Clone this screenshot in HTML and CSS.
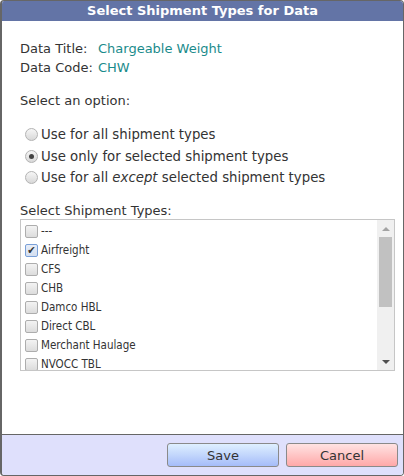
FILE: index.html
```html
<!DOCTYPE html>
<html>
<head>
<meta charset="utf-8">
<link rel="stylesheet" href="styles.css">
</head>
<body>
<div class="dialog">
  <div class="header">Select Shipment Types for Data</div>
  <div class="content">
    <div class="info">
      <div class="info-row"><span class="label">Data Title:</span><span class="value">Chargeable Weight</span></div>
      <div class="info-row"><span class="label">Data Code:</span><span class="value">CHW</span></div>
    </div>
    <div class="prompt">Select an option:</div>
    <div class="options">
      <div class="option"><span class="radio"></span><span>Use for all shipment types</span></div>
      <div class="option"><span class="radio checked"></span><span>Use only for selected shipment types</span></div>
      <div class="option"><span class="radio"></span><span>Use for all <em>except</em> selected shipment types</span></div>
    </div>
    <div class="list-label">Select Shipment Types:</div>
    <div class="listbox">
      <div class="items">
        <div class="item"><span class="cb"></span><span>---</span></div>
        <div class="item"><span class="cb checked">&#10004;</span><span>Airfreight</span></div>
        <div class="item"><span class="cb"></span><span>CFS</span></div>
        <div class="item"><span class="cb"></span><span>CHB</span></div>
        <div class="item"><span class="cb"></span><span>Damco HBL</span></div>
        <div class="item"><span class="cb"></span><span>Direct CBL</span></div>
        <div class="item"><span class="cb"></span><span>Merchant Haulage</span></div>
        <div class="item"><span class="cb"></span><span>NVOCC TBL</span></div>
      </div>
      <div class="scrollbar">
        <div class="arrow up"></div>
        <div class="track"><div class="thumb"></div></div>
        <div class="arrow down"></div>
      </div>
    </div>
  </div>
  <div class="footer">
    <button class="btn save">Save</button>
    <button class="btn cancel">Cancel</button>
  </div>
</div>
</body>
</html>
```
FILE: styles.css
```css
html, body {
  margin: 0;
  padding: 0;
  background: #fff;
}
.dialog {
  width: 404px;
  height: 476px;
  box-sizing: border-box;
  border: 1px solid #666;
  border-left-width: 2px;
  border-radius: 4px;
  display: flex;
  flex-direction: column;
  overflow: hidden;
  font-family: "DejaVu Sans", Verdana, sans-serif;
  color: #333;
}
.header {
  height: 20px;
  background: #6374a6;
  color: #fff;
  font-weight: bold;
  font-size: 13px;
  line-height: 20px;
  text-align: center;
  flex: none;
}
.content {
  flex: 1;
  padding: 18px 8px 0 18px;
  font-size: 13px;
}
.info-row {
  display: flex;
  line-height: 19px;
}
.label {
  width: 78px;
}
.value {
  color: #1a8b8b;
}
.prompt {
  margin-top: 14px;
  line-height: 19px;
}
.options {
  margin-top: 14px;
  padding-left: 5px;
}
.option {
  display: flex;
  align-items: center;
  height: 21.5px;
  font-size: 13.3px;
}
.radio {
  width: 13px;
  height: 13px;
  border-radius: 50%;
  border: 1px solid #b3b3b3;
  background: linear-gradient(#f6f6f6, #d8d8d8);
  margin-right: 3px;
  box-sizing: border-box;
  position: relative;
  flex: none;
}
.radio.checked::after {
  content: "";
  position: absolute;
  left: 3px;
  top: 3px;
  width: 5px;
  height: 5px;
  border-radius: 50%;
  background: #444;
}
.list-label {
  margin-top: 13px;
  line-height: 17px;
}
.listbox {
  margin-left: 0;
  height: 152px;
  box-sizing: border-box;
  border: 1px solid #c6c6c6;
  display: flex;
  overflow: hidden;
}
.items {
  flex: 1;
  padding: 2px 0 0 4px;
  font-size: 11.5px;
  font-stretch: condensed;
  overflow: hidden;
}
.item {
  display: flex;
  align-items: center;
  height: 19px;
}
.cb {
  width: 13px;
  height: 13px;
  box-sizing: border-box;
  border: 1px solid #adadad;
  border-radius: 2px;
  background: linear-gradient(#f3f3f3, #dcdcdc);
  margin-right: 3px;
  flex: none;
  font-size: 11px;
  line-height: 11px;
  text-align: center;
  color: #333;
}
.cb.checked {
  border-color: #7aa0d8;
  background: linear-gradient(#e8eef8, #d3def0);
}
.scrollbar {
  width: 17px;
  background: #f0f0f0;
  display: flex;
  flex-direction: column;
  align-items: center;
  flex: none;
}
.arrow {
  width: 0;
  height: 0;
  border-left: 4px solid transparent;
  border-right: 4px solid transparent;
  flex: none;
}
.arrow.up {
  margin-top: 7px;
  border-bottom: 4px solid #a3a3a3;
}
.arrow.down {
  margin-bottom: 6px;
  border-top: 4px solid #505050;
}
.track {
  flex: 1;
  width: 100%;
  padding: 6px 2px 0;
  box-sizing: border-box;
}
.thumb {
  height: 70px;
  background: #c1c1c1;
}
.footer {
  height: 40px;
  flex: none;
  border-top: 1px solid #666;
  background: #dfe0fc;
  display: flex;
  justify-content: flex-end;
  align-items: center;
  gap: 7px;
  padding: 0 5px 0 0;
}
.btn {
  width: 112px;
  height: 24px;
  border: 1px solid #8a8a8a;
  border-radius: 3px;
  font-family: "DejaVu Sans", Verdana, sans-serif;
  font-size: 13px;
  color: #333;
  padding: 0;
}
.save {
  background: linear-gradient(#dff0ff, #a5bcf9);
}
.cancel {
  background: linear-gradient(#ffe3e3, #ffa8a8);
}
```
